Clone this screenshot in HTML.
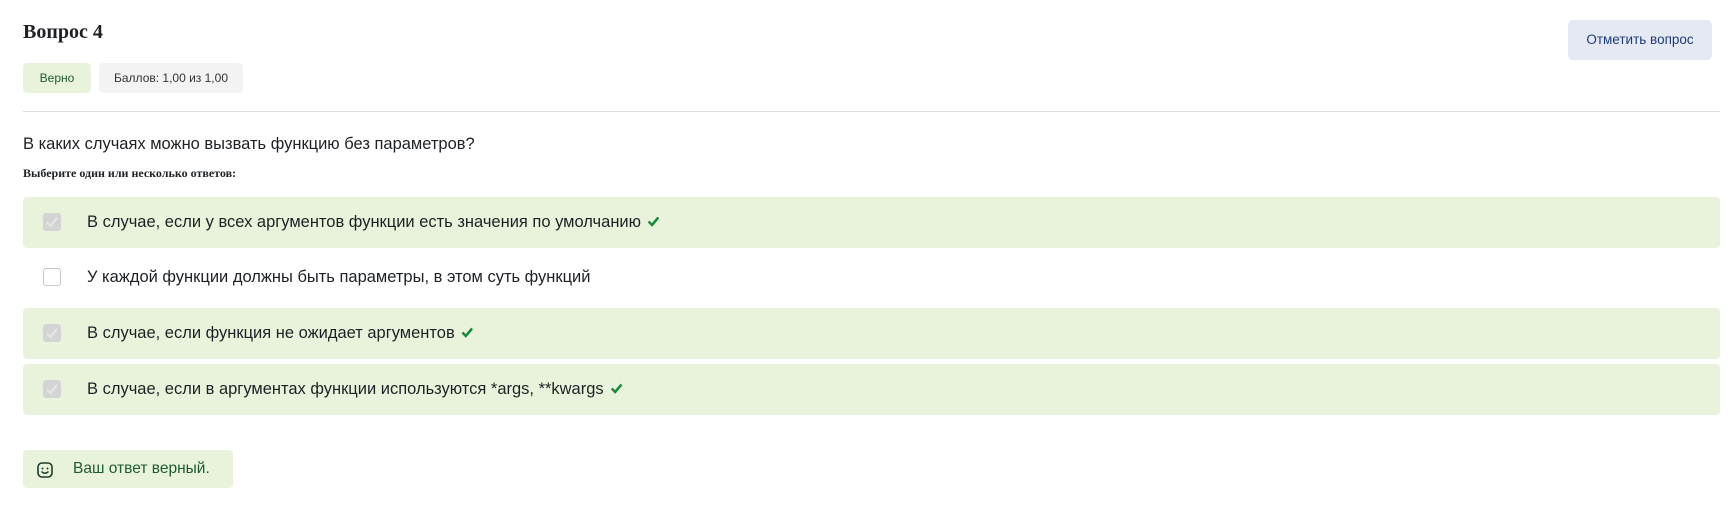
<!DOCTYPE html>
<html><head><meta charset="utf-8"><style>
body{margin:0;width:1734px;height:510px;background:#fff;font-family:"Liberation Sans",sans-serif;position:relative;overflow:hidden;color:#1d2125}
.a{position:absolute}
.n{display:inline-block;transform:scaleX(.97);transform-origin:left center;white-space:nowrap}
.box{position:absolute;left:23px;width:1697px;height:51px;border-radius:4px}
.g{background:#e9f3dc}
.cb{position:absolute;left:20px;top:16px;width:18px;height:18px;border-radius:3px;box-sizing:border-box}
.cb.c{background:#d4d4d4}
.cb.u{border:1px solid #c8c8c8;background:#fff}
.t{position:absolute;left:64px;top:15px;font-size:17px;color:#1d2125}
.ck{display:inline-block;vertical-align:middle;margin-left:6px;margin-top:-3px}
</style></head><body>
<div class="a" style="left:23px;top:21px;font-family:'Liberation Serif',serif;font-weight:bold;font-size:20px">Вопрос 4</div>
<div class="a" style="left:23px;top:63px;width:68px;height:30px;background:#e9f3dc;border-radius:4px;color:#1c5a2f;font-size:12px;line-height:30px;text-align:center">Верно</div>
<div class="a" style="left:99px;top:63px;width:144px;height:30px;background:#f3f3f3;border-radius:4px;color:#333;font-size:12px;line-height:30px;text-align:center">Баллов: 1,00 из 1,00</div>
<div class="a" style="left:1568px;top:20px;width:144px;height:40px;background:#e4e9f3;border-radius:5px;color:#1f3a78;font-size:13.5px;line-height:40px;text-align:center">Отметить вопрос</div>
<div class="a" style="left:23px;top:111px;width:1697px;height:1px;background:#dedede"></div>
<div class="a" style="left:23px;top:134px;font-size:17px"><span class="n">В каких случаях можно вызвать функцию без параметров?</span></div>
<div class="a" style="left:23px;top:166px;font-family:'Liberation Serif',serif;font-weight:bold;font-size:12px">Выберите один или несколько ответов:</div>
<div class="box g" style="top:197px"><div class="cb c"><svg width="18" height="18"><path d="M4 9.5l3.5 3.5L14 5" fill="none" stroke="#e6e6e6" stroke-width="2"/></svg></div><div class="t"><span class="n">В случае, если у всех аргументов функции есть значения по умолчанию<svg class="ck" width="14" height="12"><path d="M2 6.5l3.5 3.5L12 2.5" fill="none" stroke="#1a8a3a" stroke-width="2.6"/></svg></span></div></div>
<div class="box" style="top:252px"><div class="cb u"></div><div class="t"><span class="n">У каждой функции должны быть параметры, в этом суть функций</span></div></div>
<div class="box g" style="top:308px"><div class="cb c"><svg width="18" height="18"><path d="M4 9.5l3.5 3.5L14 5" fill="none" stroke="#e6e6e6" stroke-width="2"/></svg></div><div class="t"><span class="n">В случае, если функция не ожидает аргументов<svg class="ck" width="14" height="12"><path d="M2 6.5l3.5 3.5L12 2.5" fill="none" stroke="#1a8a3a" stroke-width="2.6"/></svg></span></div></div>
<div class="box g" style="top:364px"><div class="cb c"><svg width="18" height="18"><path d="M4 9.5l3.5 3.5L14 5" fill="none" stroke="#e6e6e6" stroke-width="2"/></svg></div><div class="t"><span class="n">В случае, если в аргументах функции используются *args, **kwargs<svg class="ck" width="14" height="12"><path d="M2 6.5l3.5 3.5L12 2.5" fill="none" stroke="#1a8a3a" stroke-width="2.6"/></svg></span></div></div>
<div class="a" style="left:23px;top:450px;width:210px;height:38px;background:#e9f3dc;border-radius:4px">
<svg class="a" style="left:14px;top:12px" width="16" height="16" viewBox="0 0 16 16"><rect x="1" y="1" width="14" height="14" rx="4" fill="none" stroke="#1c3d2a" stroke-width="1.6"/><circle cx="5.5" cy="6.5" r="1" fill="#1c3d2a"/><circle cx="10.5" cy="6.5" r="1" fill="#1c3d2a"/><path d="M4.5 9.5Q8 13 11.5 9.5" fill="none" stroke="#1c3d2a" stroke-width="1.4"/></svg>
<div class="a" style="left:50px;top:10px;font-size:16px;color:#1c5a2f"><span class="n">Ваш ответ верный.</span></div></div>
</body></html>
